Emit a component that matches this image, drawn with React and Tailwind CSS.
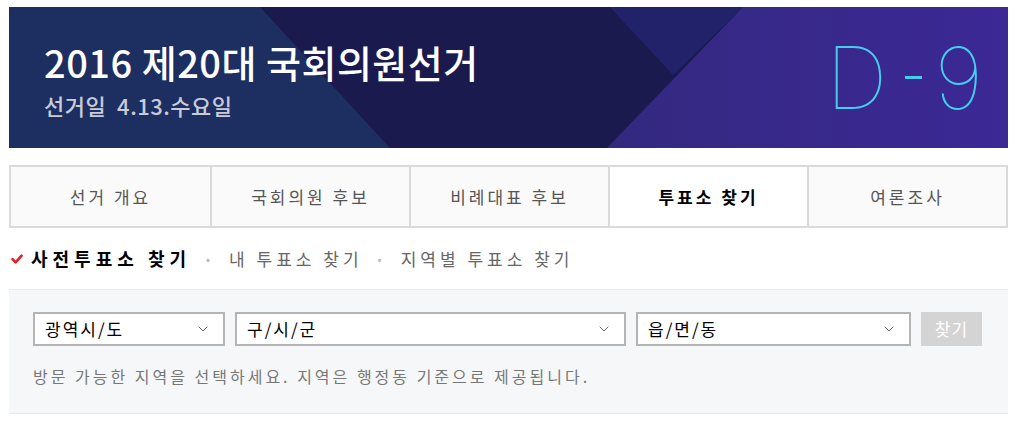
import { ChevronDown } from "lucide-react";

const tabs = ["선거 개요", "국회의원 후보", "비례대표 후보", "투표소 찾기", "여론조사"];
const activeTab = 3;

const kr = "font-['Noto_Sans_CJK_KR','Noto_Sans',sans-serif]";

const BannerArt = () => (
  <svg
    className="absolute inset-0 h-full w-full"
    viewBox="0 0 999 141"
    preserveAspectRatio="none"
  >
    <defs>
      <linearGradient id="purple" x1="0" x2="1" y1="0" y2="0">
        <stop offset="0" stopColor="#33297f" />
        <stop offset="1" stopColor="#3c2896" />
      </linearGradient>
    </defs>
    <rect width="999" height="141" fill="#1b1a4f" />
    <polygon points="0,0 251,0 381,141 0,141" fill="#1d2e60" />
    <polygon points="601,0 734,0 664,68" fill="#22226a" />
    <polygon points="734,0 999,0 999,141 598,141" fill="url(#purple)" />
  </svg>
);

const Select = ({ label, width }) => (
  <div
    className={`flex h-[34px] ${width} items-center justify-between border-2 border-[#b4b4b4] bg-white pl-[10px] pr-[12px]`}
  >
    <span className="text-[17px] tracking-[2px] text-black">{label}</span>
    <ChevronDown className="h-4 w-4 text-[#666]" strokeWidth={1.5} />
  </div>
);

export default function App() {
  return (
    <div className={`min-h-[423px] bg-white pt-[7px] ${kr}`}>
      <div className="ml-[9px] w-[999px]">
        {/* election banner */}
        <div className="relative h-[141px] overflow-hidden">
          <BannerArt />
          <div className="relative flex h-full justify-between pl-[35px] pr-[25px]">
            <div className="flex flex-col pt-[33px]">
              <h1 className="text-[38px] font-medium leading-[44px] tracking-[0.5px] text-white">
                2016 제20대 국회의원선거
              </h1>
              <p className="mt-[7px] text-[22px] font-medium leading-[28px] tracking-[0.5px] text-[#c9cbd8]">
                선거일&nbsp; 4.13.수요일
              </p>
            </div>
            <div className="flex items-center font-['Inter',sans-serif] text-[86px] font-thin leading-none text-[#45cdee]">
              <span>D</span>
              <span className="ml-[18px] mr-[12px] h-[3px] w-[17px] bg-[#45cdee]" />
              <span>9</span>
            </div>
          </div>
        </div>

        {/* section tabs */}
        <div className="mt-[17px] grid h-[63px] grid-cols-5 border-2 border-[#dadada]">
          {tabs.map((tab, i) => (
            <div
              key={tab}
              className={`flex items-center justify-center text-[17px] tracking-[3px] ${
                i > 0 ? "border-l-2 border-[#dadada]" : ""
              } ${
                i === activeTab
                  ? "bg-white font-bold text-black"
                  : "bg-[#fafafa] text-[#555]"
              }`}
            >
              {tab}
            </div>
          ))}
        </div>

        {/* polling place sub menu */}
        <div className="flex h-[61px] items-center tracking-[4px]">
          <svg className="ml-[2px] mr-[8px] h-[12px] w-[12px]" viewBox="0 0 12 12">
            <path
              d="M1.5 6.2 L4.6 9.4 L10.6 2.6"
              fill="none"
              stroke="#e0202a"
              strokeWidth="2.6"
              strokeLinecap="round"
              strokeLinejoin="round"
            />
          </svg>
          <span className="text-[18px] font-bold tracking-[5px] text-black">사전투표소 찾기</span>
          <span className="mx-[15px] text-[12px] text-[#bbb]">•</span>
          <span className="text-[17px] text-[#666]">내 투표소 찾기</span>
          <span className="mx-[15px] text-[12px] text-[#bbb]">•</span>
          <span className="text-[17px] text-[#666]">지역별 투표소 찾기</span>
        </div>

        {/* region search */}
        <div className="h-[125px] border-y border-[#e8e9ec] bg-[#f6f7f9] px-[24px] pt-[22px]">
          <div className="flex gap-[10px]">
            <Select label="광역시/도" width="w-[192px]" />
            <Select label="구/시/군" width="w-[391px]" />
            <Select label="읍/면/동" width="w-[275px]" />
            <button className="h-[34px] w-[61px] bg-[#d4d4d4] text-[17px] tracking-[1px] text-white">
              찾기
            </button>
          </div>
          <p className="mt-[18px] text-[16px] tracking-[3px] text-[#777]">
            방문 가능한 지역을 선택하세요. 지역은 행정동 기준으로 제공됩니다.
          </p>
        </div>
      </div>
    </div>
  );
}
